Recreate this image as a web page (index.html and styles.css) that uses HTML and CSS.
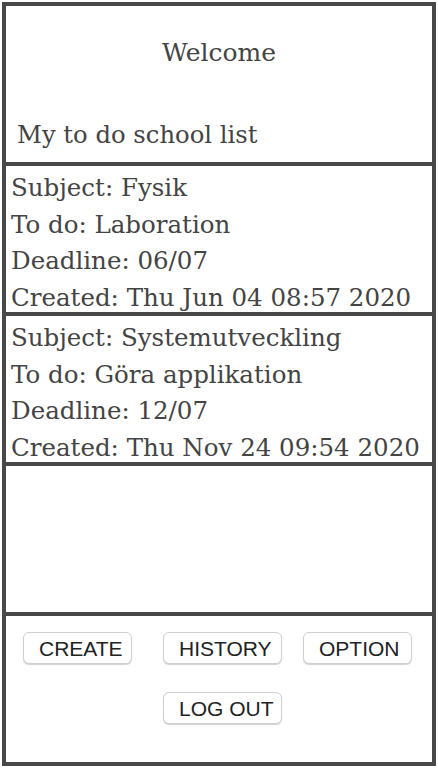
FILE: index.html
```html
<!DOCTYPE html>
<html lang="en">
<head>
<meta charset="utf-8">
<title>My to do school list</title>
<link rel="stylesheet" href="styles.css">
</head>
<body>
<div class="app">
  <header class="section header">
    <h1 class="welcome">Welcome</h1>
    <h2 class="list-title">My to do school list</h2>
  </header>
  <div class="section item">
    <div class="line">Subject: Fysik</div>
    <div class="line">To do: Laboration</div>
    <div class="line">Deadline: 06/07</div>
    <div class="line">Created: Thu Jun 04 08:57 2020</div>
  </div>
  <div class="section item">
    <div class="line">Subject: Systemutveckling</div>
    <div class="line">To do: Göra applikation</div>
    <div class="line">Deadline: 12/07</div>
    <div class="line">Created: Thu Nov 24 09:54 2020</div>
  </div>
  <div class="section item"></div>
  <footer class="section footer">
    <div class="row">
      <button class="btn btn-create">CREATE</button>
      <button class="btn btn-history">HISTORY</button>
      <button class="btn btn-option">OPTION</button>
    </div>
    <div class="row row-second">
      <button class="btn btn-logout">LOG OUT</button>
    </div>
  </footer>
</div>
</body>
</html>
```
FILE: styles.css
```css
html, body {
  margin: 0;
  padding: 0;
  background: #fff;
}
body {
  padding: 2px;
  font-family: "DejaVu Serif", "Liberation Serif", serif;
  color: #444;
}
.app {
  box-sizing: border-box;
  width: 434px;
  height: 764px;
  border: 2px solid #484848;
  display: flex;
  flex-direction: column;
}
.section {
  box-sizing: border-box;
  border: 2px solid #484848;
  min-height: 0;
}
.header {
  flex: 0 0 160px;
  display: flex;
  flex-direction: column;
}
.welcome {
  margin: 0;
  padding-top: 32px;
  font-size: 25px;
  font-weight: normal;
  text-align: center;
  line-height: 30px;
}
.list-title {
  margin: 0;
  margin-top: 52px;
  padding-left: 11px;
  font-size: 24.3px;
  font-weight: normal;
  line-height: 30px;
}
.item {
  flex: 1 1 150px;
  padding: 4px 0 0 5px;
}
.line {
  font-size: 24.5px;
  line-height: 36.5px;
  white-space: nowrap;
}
.footer {
  flex: 1 1 150px;
  padding-top: 16px;
}
.row {
  display: flex;
  padding-left: 17px;
}
.row-second {
  margin-top: 28px;
  padding-left: 157px;
}
.btn {
  box-sizing: border-box;
  height: 32px;
  background: #fff;
  border: 1px solid #cfcfcf;
  border-radius: 6px;
  box-shadow: 0 1px 1px rgba(0, 0, 0, 0.18);
  font-family: "Liberation Sans", Arial, sans-serif;
  font-size: 21px;
  color: #222;
  padding: 1px 0 0 15px;
  text-align: left;
  line-height: 30px;
}
.btn-create { width: 109px; margin-right: 31px; }
.btn-history { width: 119px; margin-right: 21px; }
.btn-option { width: 109px; }
.btn-logout { width: 119px; }
```
